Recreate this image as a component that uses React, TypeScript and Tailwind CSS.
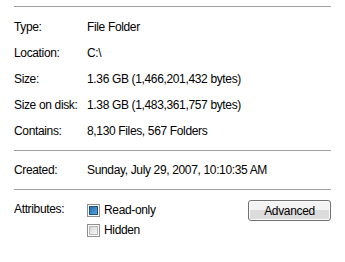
const ROWS = [
  { label: "Type:", value: "File Folder" },
  { label: "Location:", value: "C:\\" },
  { label: "Size:", value: "1.36 GB (1,466,201,432 bytes)" },
  { label: "Size on disk:", value: "1.38 GB (1,483,361,757 bytes)" },
  { label: "Contains:", value: "8,130 Files, 567 Folders" },
];

export default function App() {
  return (
    <div
      className="h-[262px] w-[345px] bg-white pl-[14px] pt-[6px] text-[12px] tracking-[-0.35px] text-black"
      style={{ fontFamily: '"Segoe UI", "Liberation Sans", Arial, sans-serif' }}
    >
      <div className="w-[317px]">
        <div className="h-px bg-[#a0a0a0]" />

        <div className="mt-[7px]">
          {ROWS.map((r) => (
            <Row key={r.label} label={r.label}>
              {r.value}
            </Row>
          ))}
        </div>

        <div className="mt-[6px] h-px bg-[#a0a0a0]" />

        <div className="mt-[6px]">
          <Row label="Created:">Sunday, July 29, 2007, 10:10:35 AM</Row>
        </div>

        <div className="mt-[6px] h-px bg-[#a0a0a0]" />

        {/* Attributes */}
        <div className="mt-[10px] flex">
          <div className="flex w-[73px] items-start pt-[1px] leading-[16px]">
            Attributes:
          </div>
          <div className="flex flex-col gap-[5px] pt-[3px]">
            <Check checked label="Read-only" />
            <Check checked={false} label="Hidden" />
          </div>
          <button className="ml-auto h-[21px] w-[83px] rounded-[3px] border border-[#707070] bg-gradient-to-b from-[#f3f3f3] from-50% to-[#dcdcdc] to-50% text-[12px] leading-none tracking-[-0.35px] text-black shadow-[inset_0_0_0_1px_#fcfcfc]">
            Advanced
          </button>
        </div>
      </div>
    </div>
  );
}

function Row({
  label,
  children,
}: {
  label: string;
  children: React.ReactNode;
}) {
  return (
    <div className="flex h-[26px] items-center">
      <span className="w-[73px] shrink-0">{label}</span>
      <span className="whitespace-nowrap">{children}</span>
    </div>
  );
}

function Check({ checked, label }: { checked: boolean; label: string }) {
  return (
    <div className="flex h-[15px] items-center gap-[4px]">
      <span className="flex h-[13px] w-[13px] items-center justify-center border border-[#8e8f8f] bg-white">
        <span
          className={
            checked
              ? "h-[9px] w-[9px] border border-[#1c5180] bg-gradient-to-br from-[#2d6fae] to-[#4fa3dc]"
              : "h-[9px] w-[9px] border border-[#b8b8b8] bg-gradient-to-br from-[#d6d6d6] to-[#f8f8f8]"
          }
        />
      </span>
      <span className="leading-[15px]">{label}</span>
    </div>
  );
}
